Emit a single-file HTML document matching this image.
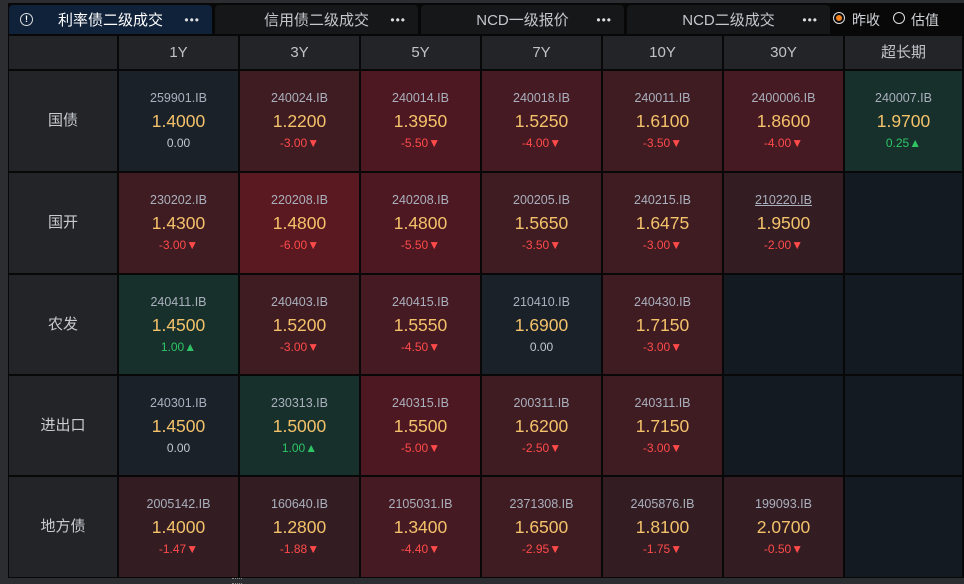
<!DOCTYPE html><html><head><meta charset="utf-8"><style>
body{margin:0;width:964px;height:584px;background:#2b2d31;position:relative;overflow:hidden;font-family:"Liberation Sans","Noto Sans CJK SC",sans-serif}
.in{position:absolute;left:8px;top:3px;width:956px;height:575px;background:#080808}
.tab{position:absolute;top:5px;height:29px;background:#161719;border-radius:4px 4px 0 0;color:#c4c7cc;font-size:15px;line-height:31px}
.tab .t{position:absolute;left:0;right:0;text-align:center}
.dots{position:absolute;right:12px;top:0;font-size:12px;letter-spacing:1px;color:#dcdcdc}
.c{position:absolute;text-align:center;color:#b9bdc4}
.h{font-size:15px;line-height:33px;background:#222428;color:#c0c3c8}
.l{background:#222428;font-size:15px;color:#c8cbd0}
.code{position:absolute;left:0;right:0;top:20px;font-size:12.5px;color:#aab0bd}
.v{position:absolute;left:0;right:0;top:40px;font-size:17.5px;color:#f4c26a}
.d{position:absolute;left:0;right:0;top:65px;font-size:12px;color:#ff4a4a}
.g{color:#2ec466}.z{color:#c4c8ce}
.rd{font-size:12px}
</style></head><body>
<div class="in"></div>
<div class="tab" style="left:9px;width:203px;background:#10213a;color:#fff"><span style="position:absolute;left:11px;top:8px;width:11px;height:11px;border:1.5px solid #ddd;border-radius:50%;font-size:9px;line-height:11px;text-align:center;font-weight:bold">!</span><span class="t">利率债二级成交</span><span class="dots">•••</span></div>
<div class="tab" style="left:215px;width:203px"><span class="t">信用债二级成交</span><span class="dots">•••</span></div>
<div class="tab" style="left:421px;width:203px"><span class="t">NCD一级报价</span><span class="dots">•••</span></div>
<div class="tab" style="left:627px;width:203px"><span class="t">NCD二级成交</span><span class="dots">•••</span></div>
<div style="position:absolute;left:833px;top:12px;width:10px;height:10px;border:1px solid #ddd;border-radius:50%;"><div style="position:absolute;left:2px;top:2px;width:6px;height:6px;border-radius:50%;background:#f5821f"></div></div>
<div style="position:absolute;left:852px;top:10px;color:#d0d3d8;font-size:14px">昨收</div>
<div style="position:absolute;left:893px;top:12px;width:10px;height:10px;border:1px solid #ddd;border-radius:50%"></div>
<div style="position:absolute;left:911px;top:10px;color:#d0d3d8;font-size:14px">估值</div>
<div id="g"></div>
<div style="position:absolute;left:232px;top:578px;width:10px;height:4px;border-top:1px dotted #888;border-bottom:1px dotted #888"></div>
<script>
const xs=[[9,117],[119,238],[240,359],[361,480],[482,601],[603,722],[724,843],[845,962]];
const ys=[[71,171],[173,273],[275,374],[376,475],[477,577]];
const hd=["","1Y","3Y","5Y","7Y","10Y","30Y","超长期"];
const lb=["国债","国开","农发","进出口","地方债"];
const R={n:"#1a2129",g:"#17302b",e:"#141a21",r1:"#331d23",r2:"#3f1b22",r3:"#461a22",r4:"#4d1821",r5:"#5a1820"};
const D=[
[["259901.IB","1.4000","0.00","n"],["240024.IB","1.2200","-3.00","r2"],["240014.IB","1.3950","-5.50","r4"],["240018.IB","1.5250","-4.00","r3"],["240011.IB","1.6100","-3.50","r2"],["2400006.IB","1.8600","-4.00","r3"],["240007.IB","1.9700","0.25","g"]],
[["230202.IB","1.4300","-3.00","r2"],["220208.IB","1.4800","-6.00","r5"],["240208.IB","1.4800","-5.50","r4"],["200205.IB","1.5650","-3.50","r2"],["240215.IB","1.6475","-3.00","r2"],["210220.IB","1.9500","-2.00","r1"],null],
[["240411.IB","1.4500","1.00","g"],["240403.IB","1.5200","-3.00","r2"],["240415.IB","1.5550","-4.50","r3"],["210410.IB","1.6900","0.00","n"],["240430.IB","1.7150","-3.00","r2"],null,null],
[["240301.IB","1.4500","0.00","n"],["230313.IB","1.5000","1.00","g"],["240315.IB","1.5500","-5.00","r4"],["200311.IB","1.6200","-2.50","r2"],["240311.IB","1.7150","-3.00","r2"],null,null],
[["2005142.IB","1.4000","-1.47","r1"],["160640.IB","1.2800","-1.88","r1"],["2105031.IB","1.3400","-4.40","r3"],["2371308.IB","1.6500","-2.95","r2"],["2405876.IB","1.8100","-1.75","r1"],["199093.IB","2.0700","-0.50","r1"],null]];
let h="";
xs.forEach((x,i)=>{h+=`<div class="c h" style="left:${x[0]}px;top:36px;width:${x[1]-x[0]}px;height:33px">${hd[i]}</div>`});
ys.forEach((y,r)=>{
 h+=`<div class="c l" style="left:9px;top:${y[0]}px;width:108px;height:${y[1]-y[0]}px;line-height:${y[1]-y[0]}px">${lb[r]}</div>`;
 for(let c=1;c<8;c++){const x=xs[c],d=D[r][c-1];
  let st=`left:${x[0]}px;top:${y[0]}px;width:${x[1]-x[0]}px;height:${y[1]-y[0]}px;background:${d?R[d[3]]:R.e}`;
  if(!d){h+=`<div class="c" style="${st}"></div>`;continue;}
  let cls=d[2].startsWith("-")?"":(d[2]=="0.00"?"z":"g");
  let ar=d[2].startsWith("-")?'<span class="rd">▼</span>':(d[2]=="0.00"?"":'<span class="rd">▲</span>');
  let u=(d[0]=="210220.IB")?"text-decoration:underline;":"";
  h+=`<div class="c" style="${st}"><div class="code" style="${u}">${d[0]}</div><div class="v">${d[1]}</div><div class="d ${cls}">${d[2]}${ar}</div></div>`;
 }
});
document.getElementById("g").innerHTML=h;
</script>
</body></html>
